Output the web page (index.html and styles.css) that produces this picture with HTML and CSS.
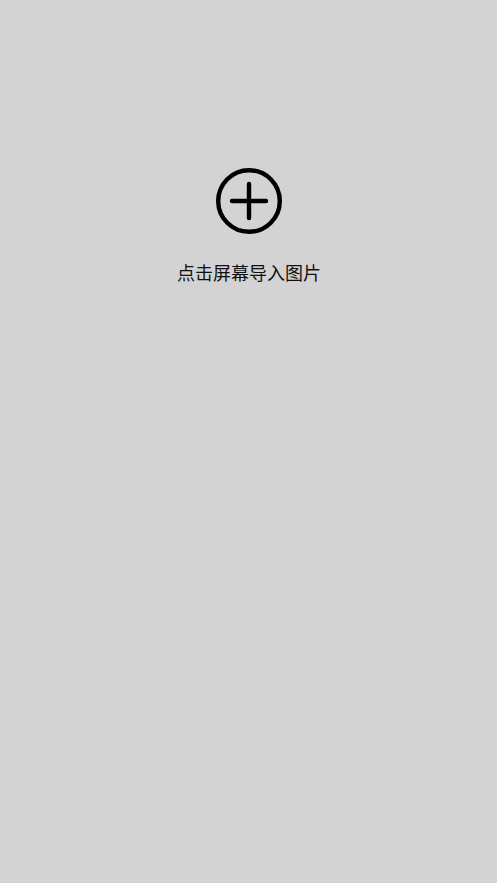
FILE: index.html
```html
<!DOCTYPE html>
<html lang="zh">
<head>
<meta charset="utf-8">
<link rel="stylesheet" href="styles.css">
</head>
<body>
<main class="screen">
  <div class="picker">
    <svg class="add-icon" width="70" height="70" viewBox="0 0 70 70" aria-hidden="true">
      <circle cx="35" cy="35" r="30.8" fill="none" stroke="#000" stroke-width="4.4"/>
      <path d="M18 35 H52 M35 18 V52" stroke="#000" stroke-width="4.4" stroke-linecap="round"/>
    </svg>
    <p class="hint">点击屏幕导入图片</p>
  </div>
</main>
</body>
</html>
```
FILE: styles.css
```css
html, body {
  margin: 0;
  padding: 0;
  background: #d3d3d3;
}
.screen {
  width: 497px;
  height: 883px;
  display: flex;
  flex-direction: column;
  align-items: center;
  font-family: "Noto Sans CJK SC", "Noto Sans", sans-serif;
}
.picker {
  display: flex;
  flex-direction: column;
  align-items: center;
  padding-top: 166px;
  margin-left: 1px;
}
.add-icon {
  display: block;
}
.hint {
  margin: 24px 0 0;
  font-size: 18px;
  line-height: 24px;
  color: #111;
}
```
